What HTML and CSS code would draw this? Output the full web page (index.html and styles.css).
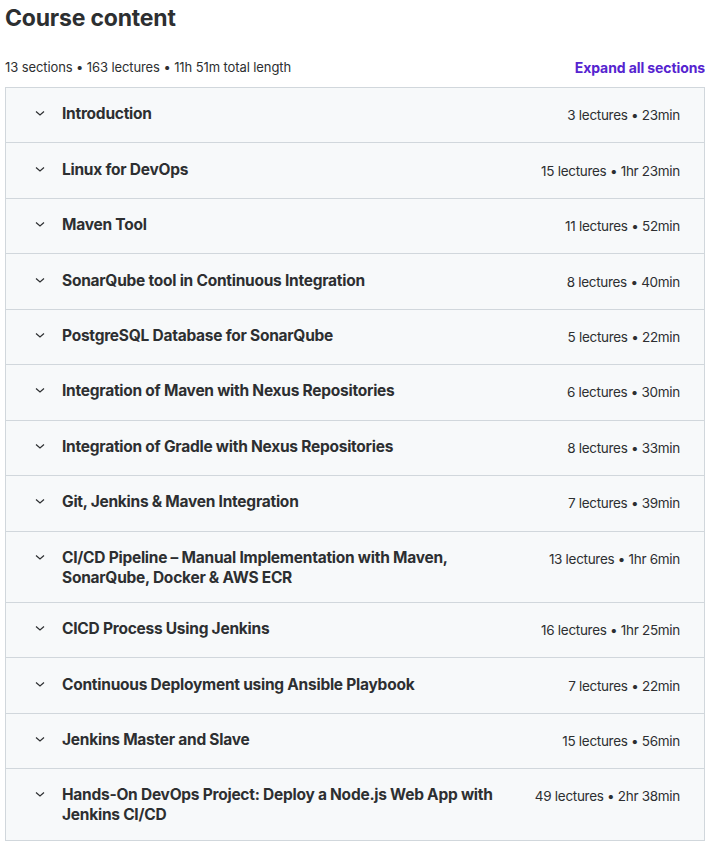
FILE: index.html
```html
<!DOCTYPE html>
<html>
<head>
  <meta charset="utf-8">
  <meta name="viewport" content="width=device-width, initial-scale=1">
  <title>Course content</title>
  <link rel="stylesheet" href="styles.css">
</head>
<body>
  <div class="curriculum">
    <h2 class="heading">Course content</h2>

    <div class="summary">
      <span class="summary-text">13 sections • 163 lectures • 11h 51m total length</span>
      <button class="expand-btn">Expand all sections</button>
    </div>

    <div class="sections">
      <div class="section">
        <svg class="chevron" viewBox="0 0 16 16"><path d="M4 6.5l4 3.5 4-3.5"/></svg>
        <span class="section-title">Introduction</span>
        <span class="section-meta">3 lectures • 23min</span>
      </div>
      <div class="section">
        <svg class="chevron" viewBox="0 0 16 16"><path d="M4 6.5l4 3.5 4-3.5"/></svg>
        <span class="section-title">Linux for DevOps</span>
        <span class="section-meta">15 lectures • 1hr 23min</span>
      </div>
      <div class="section">
        <svg class="chevron" viewBox="0 0 16 16"><path d="M4 6.5l4 3.5 4-3.5"/></svg>
        <span class="section-title">Maven Tool</span>
        <span class="section-meta">11 lectures • 52min</span>
      </div>
      <div class="section">
        <svg class="chevron" viewBox="0 0 16 16"><path d="M4 6.5l4 3.5 4-3.5"/></svg>
        <span class="section-title">SonarQube tool in Continuous Integration</span>
        <span class="section-meta">8 lectures • 40min</span>
      </div>
      <div class="section">
        <svg class="chevron" viewBox="0 0 16 16"><path d="M4 6.5l4 3.5 4-3.5"/></svg>
        <span class="section-title">PostgreSQL Database for SonarQube</span>
        <span class="section-meta">5 lectures • 22min</span>
      </div>
      <div class="section">
        <svg class="chevron" viewBox="0 0 16 16"><path d="M4 6.5l4 3.5 4-3.5"/></svg>
        <span class="section-title">Integration of Maven with Nexus Repositories</span>
        <span class="section-meta">6 lectures • 30min</span>
      </div>
      <div class="section">
        <svg class="chevron" viewBox="0 0 16 16"><path d="M4 6.5l4 3.5 4-3.5"/></svg>
        <span class="section-title">Integration of Gradle with Nexus Repositories</span>
        <span class="section-meta">8 lectures • 33min</span>
      </div>
      <div class="section">
        <svg class="chevron" viewBox="0 0 16 16"><path d="M4 6.5l4 3.5 4-3.5"/></svg>
        <span class="section-title">Git, Jenkins &amp; Maven Integration</span>
        <span class="section-meta">7 lectures • 39min</span>
      </div>
      <div class="section">
        <svg class="chevron" viewBox="0 0 16 16"><path d="M4 6.5l4 3.5 4-3.5"/></svg>
        <span class="section-title">CI/CD Pipeline – Manual Implementation with Maven, SonarQube, Docker &amp; AWS ECR</span>
        <span class="section-meta">13 lectures • 1hr 6min</span>
      </div>
      <div class="section">
        <svg class="chevron" viewBox="0 0 16 16"><path d="M4 6.5l4 3.5 4-3.5"/></svg>
        <span class="section-title">CICD Process Using Jenkins</span>
        <span class="section-meta">16 lectures • 1hr 25min</span>
      </div>
      <div class="section">
        <svg class="chevron" viewBox="0 0 16 16"><path d="M4 6.5l4 3.5 4-3.5"/></svg>
        <span class="section-title">Continuous Deployment using Ansible Playbook</span>
        <span class="section-meta">7 lectures • 22min</span>
      </div>
      <div class="section">
        <svg class="chevron" viewBox="0 0 16 16"><path d="M4 6.5l4 3.5 4-3.5"/></svg>
        <span class="section-title">Jenkins Master and Slave</span>
        <span class="section-meta">15 lectures • 56min</span>
      </div>
      <div class="section">
        <svg class="chevron" viewBox="0 0 16 16"><path d="M4 6.5l4 3.5 4-3.5"/></svg>
        <span class="section-title">Hands-On DevOps Project: Deploy a Node.js Web App with Jenkins CI/CD</span>
        <span class="section-meta">49 lectures • 2hr 38min</span>
      </div>
    </div>
  </div>
</body>
</html>
```

FILE: styles.css
```css
body {
  margin: 0;
  padding: 0 0 0 5px;
  font-family: Inter, 'Noto Sans', sans-serif;
  color: #2d2f31;
  background: #fff;
}

.curriculum {
  width: 700px;
}

.heading {
  margin: 0;
  font-size: 23px;
  line-height: 36px;
  font-weight: 700;
  letter-spacing: -0.2px;
}

.summary {
  display: flex;
  justify-content: space-between;
  align-items: center;
  margin-top: 20px;
  margin-bottom: 9px;
  height: 22px;
}

.summary-text {
  font-size: 13px;
  letter-spacing: -0.1px;
}

.expand-btn {
  padding: 0;
  border: none;
  background: none;
  font-family: inherit;
  font-size: 14px;
  font-weight: 700;
  color: #5624d0;
  cursor: pointer;
  letter-spacing: -0.1px;
}

.sections {
  border: 1px solid #d1d7dc;
  border-bottom: none;
}

/* title sits 1px lower than the meta line, so padding is uneven */
.section {
  display: flex;
  align-items: flex-start;
  padding: 16.23px 24px 14.23px 26px;
  background: #f7f9fa;
  border-bottom: 1px solid #d1d7dc;
  cursor: pointer;
}

.chevron {
  flex: none;
  width: 16px;
  height: 16px;
  margin-top: 1px;
  margin-right: 14px;
  fill: none;
  stroke: #2d2f31;
  stroke-width: 1.2;
}

.section-title {
  flex: 1;
  max-width: 450px;
  font-size: 15.5px;
  font-weight: 700;
  line-height: 20px;
  letter-spacing: -0.25px;
}

.section-meta {
  margin: -1px 0 1px auto;
  font-size: 13.5px;
  line-height: 24px;
  letter-spacing: -0.3px;
  white-space: nowrap;
}
```
